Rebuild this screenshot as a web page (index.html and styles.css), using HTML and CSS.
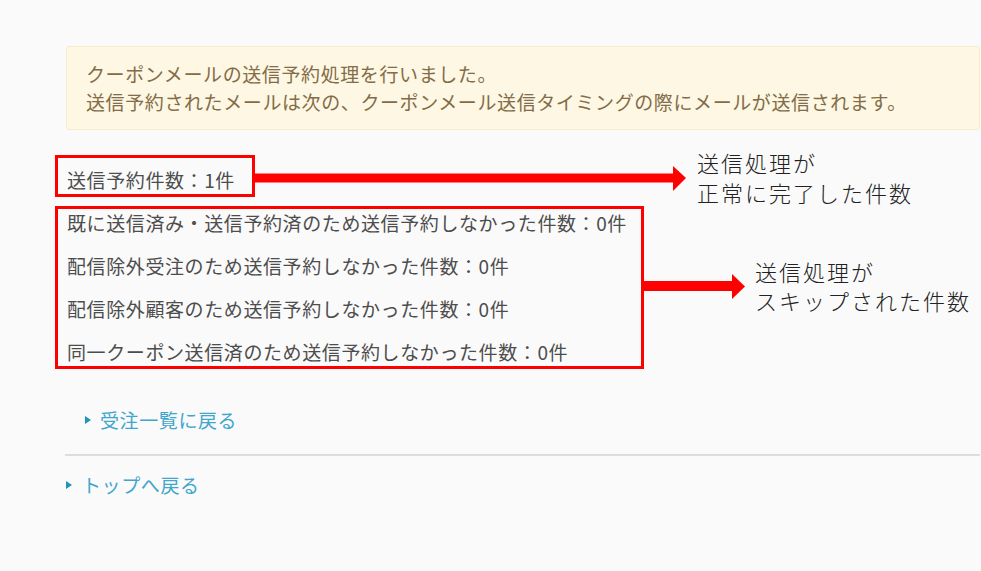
FILE: index.html
```html
<!DOCTYPE html>
<html lang="ja">
<head>
    <meta charset="UTF-8">
    <meta name="viewport" content="width=device-width, initial-scale=1.0">
    <title>クーポンメール送信予約</title>
    <link rel="stylesheet" href="styles.css">
</head>
<body>
    <div class="page">
        <div class="notice">
            <p>クーポンメールの送信予約処理を行いました。</p>
            <p>送信予約されたメールは次の、クーポンメール送信タイミングの際にメールが送信されます。</p>
        </div>

        <div class="result">
            <div class="mark mark-done">
                <p class="count">送信予約件数：1件</p>
            </div>
            <div class="mark mark-skip">
                <p class="count">既に送信済み・送信予約済のため送信予約しなかった件数：0件</p>
                <p class="count">配信除外受注のため送信予約しなかった件数：0件</p>
                <p class="count">配信除外顧客のため送信予約しなかった件数：0件</p>
                <p class="count">同一クーポン送信済のため送信予約しなかった件数：0件</p>
            </div>
        </div>

        <a class="link link-back" href="#">受注一覧に戻る</a>
        <hr class="rule">
        <a class="link link-top" href="#">トップへ戻る</a>
    </div>

    <!-- annotation layer -->
    <svg class="arrows" width="981" height="571" viewBox="0 0 981 571">
        <rect x="252" y="173.5" width="422" height="9" fill="#ff0000"/>
        <polygon points="673,166 686,178 673,191" fill="#ff0000"/>
        <rect x="642" y="281" width="91" height="10" fill="#ff0000"/>
        <polygon points="732,274 745,286.5 732,299" fill="#ff0000"/>
    </svg>
    <div class="callout callout-done">送信処理が<br>正常に完了した件数</div>
    <div class="callout callout-skip">送信処理が<br>スキップされた件数</div>
</body>
</html>
```

FILE: styles.css
```css
body {
    margin: 0;
    background-color: #fafafa;
    font-family: "Noto Sans CJK JP", "Noto Sans", sans-serif;
    font-size: 19px;
    letter-spacing: 0.6px;
    color: #4d4d4d;
}

p {
    margin: 0;
}

.page {
    padding: 46px 1px 0 66px;
}

.notice {
    background-color: #fdf7e3;
    border: 1px solid #f7ecc9;
    border-radius: 3px;
    padding: 13px 19px;
    line-height: 28px;
    color: #836c47;
}

.result {
    display: flex;
    flex-direction: column;
    align-items: flex-start;
    gap: 9px;
    margin-top: 25px;
    margin-left: -11px;
}

.mark {
    border: 3px solid #ff0000;
}

.mark-done {
    padding: 8px 17px 0 9px;
}

.mark-skip {
    display: flex;
    flex-direction: column;
    gap: 15px;
    padding: 0 14px 0 9px;
}

.count {
    line-height: 28px;
}

.link {
    display: flex;
    align-items: center;
    line-height: 28px;
    color: #3fa6cc;
    text-decoration: none;
}

.link::before {
    content: "";
    border-left: 6px solid #1f92bd;
    border-top: 4.5px solid transparent;
    border-bottom: 4.5px solid transparent;
}

.link-back {
    gap: 9px;
    margin: 37px 0 0 19px;
}

.link-top {
    gap: 10px;
    margin-top: 15px;
}

.rule {
    margin: 20px 0 0 -1px;
    border: none;
    border-top: 2px solid #dddddd;
}

.arrows {
    position: absolute;
    top: 0;
    left: 0;
    pointer-events: none;
}

.callout {
    position: absolute;
    font-size: 22px;
    font-weight: 300;
    letter-spacing: 2px;
    color: #222222;
}

.callout-done {
    left: 697px;
    top: 147px;
    line-height: 30px;
}

.callout-skip {
    left: 755px;
    top: 257px;
    line-height: 29px;
}
```
